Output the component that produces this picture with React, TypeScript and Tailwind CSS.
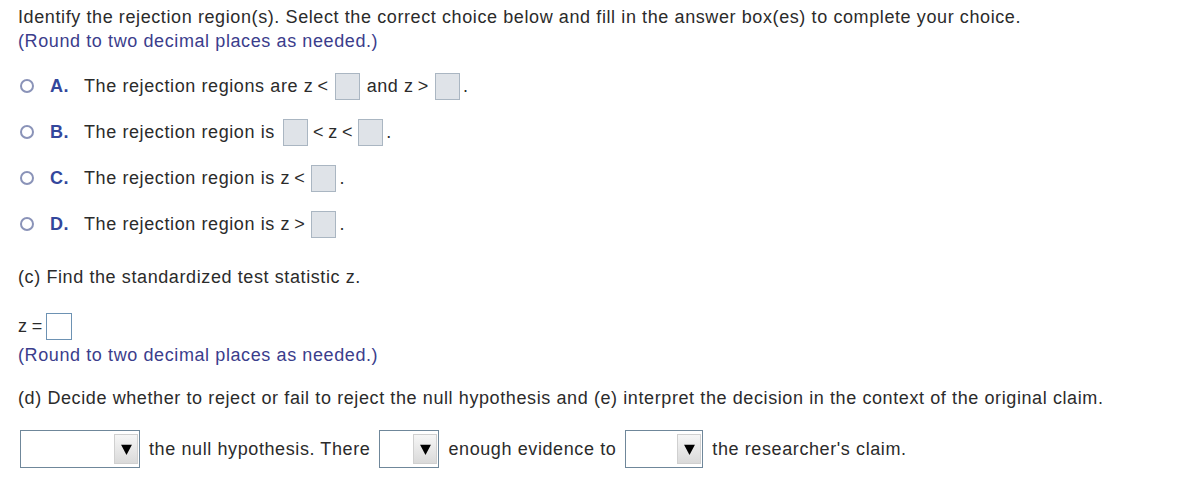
import React from "react";

const AnswerBox = ({ filled = true }: { filled?: boolean }) => (
  <span
    className={
      filled
        ? "block w-[25px] h-[27px] bg-[#dfe3e8] border border-[#aab6c2]"
        : "block w-[26px] h-[27px] bg-white border border-[#6d92b3]"
    }
  />
);

const Dropdown = ({ width }: { width: string }) => (
  <div className={`${width} h-[38px] shrink-0 flex items-stretch border border-[#6f879a] bg-white`}>
    <div className="flex-1" />
    <div className="w-[24px] my-[3px] mr-[1px] flex items-center justify-center border border-[#d0d0d0] bg-gradient-to-b from-[#f6f6f6] to-[#dadada]">
      <svg width="13" height="13" viewBox="0 0 12 12">
        <path d="M1 1.5 H11 L6 11 Z" fill="#000" />
      </svg>
    </div>
  </div>
);

type Option = {
  letter: string;
  content: React.ReactNode;
};

const options: Option[] = [
  {
    letter: "A.",
    content: (
      <>
        <span>The rejection regions are z&thinsp;&lt;</span>
        <span className="ml-[6px]"><AnswerBox /></span>
        <span className="ml-[7px]">and z&thinsp;&gt;</span>
        <span className="ml-[6px]"><AnswerBox /></span>
        <span className="ml-[3px]">.</span>
      </>
    ),
  },
  {
    letter: "B.",
    content: (
      <>
        <span>The rejection region is</span>
        <span className="ml-[8px]"><AnswerBox /></span>
        <span className="ml-[5px]">&lt;&thinsp;z&thinsp;&lt;</span>
        <span className="ml-[5px]"><AnswerBox /></span>
        <span className="ml-[3px]">.</span>
      </>
    ),
  },
  {
    letter: "C.",
    content: (
      <>
        <span>The rejection region is z&thinsp;&lt;</span>
        <span className="ml-[6px]"><AnswerBox /></span>
        <span className="ml-[3px]">.</span>
      </>
    ),
  },
  {
    letter: "D.",
    content: (
      <>
        <span>The rejection region is z&thinsp;&gt;</span>
        <span className="ml-[6px]"><AnswerBox /></span>
        <span className="ml-[3px]">.</span>
      </>
    ),
  },
];

const App: React.FC = () => {
  return (
    <div className="w-[1201px] h-[486px] bg-white pl-[18px] pt-[5px] text-[18px] tracking-[0.6px] text-[#2b2b2b] font-['Liberation_Sans',Arial,sans-serif]">
      <p className="leading-[24px]">
        Identify the rejection region(s). Select the correct choice below and fill in the answer box(es) to complete your choice.
      </p>
      <p className="leading-[24px] text-[#3b3d8c]">(Round to two decimal places as needed.)</p>

      {/* Choices */}
      <div className="mt-[10px]">
        {options.map((opt) => (
          <div key={opt.letter} className="h-[46px] flex items-center">
            <span className="ml-[2px] shrink-0 block w-[14px] h-[14px] rounded-full border-2 border-[#8a93b8]" />
            <span className="ml-[16px] w-[34px] shrink-0 font-bold text-[#33479c]">{opt.letter}</span>
            <div className="flex items-center">{opt.content}</div>
          </div>
        ))}
      </div>

      <p className="mt-[18px] leading-[24px]">(c) Find the standardized test statistic z.</p>

      <div className="mt-[23px] h-[28px] flex items-center">
        <span>z&thinsp;=</span>
        <span className="ml-[3px] flex"><AnswerBox filled={false} /></span>
      </div>
      <p className="mt-[3px] leading-[24px] text-[#3b3d8c]">(Round to two decimal places as needed.)</p>

      <p className="mt-[19px] leading-[24px]">
        (d) Decide whether to reject or fail to reject the null hypothesis and (e) interpret the decision in the context of the original claim.
      </p>

      <div className="mt-[20px] ml-[2px] flex items-center gap-[9px]">
        <Dropdown width="w-[120px]" />
        <span>the null hypothesis. There</span>
        <Dropdown width="w-[60px]" />
        <span>enough evidence to</span>
        <Dropdown width="w-[78px]" />
        <span>the researcher's claim.</span>
      </div>
    </div>
  );
};

export default App;
